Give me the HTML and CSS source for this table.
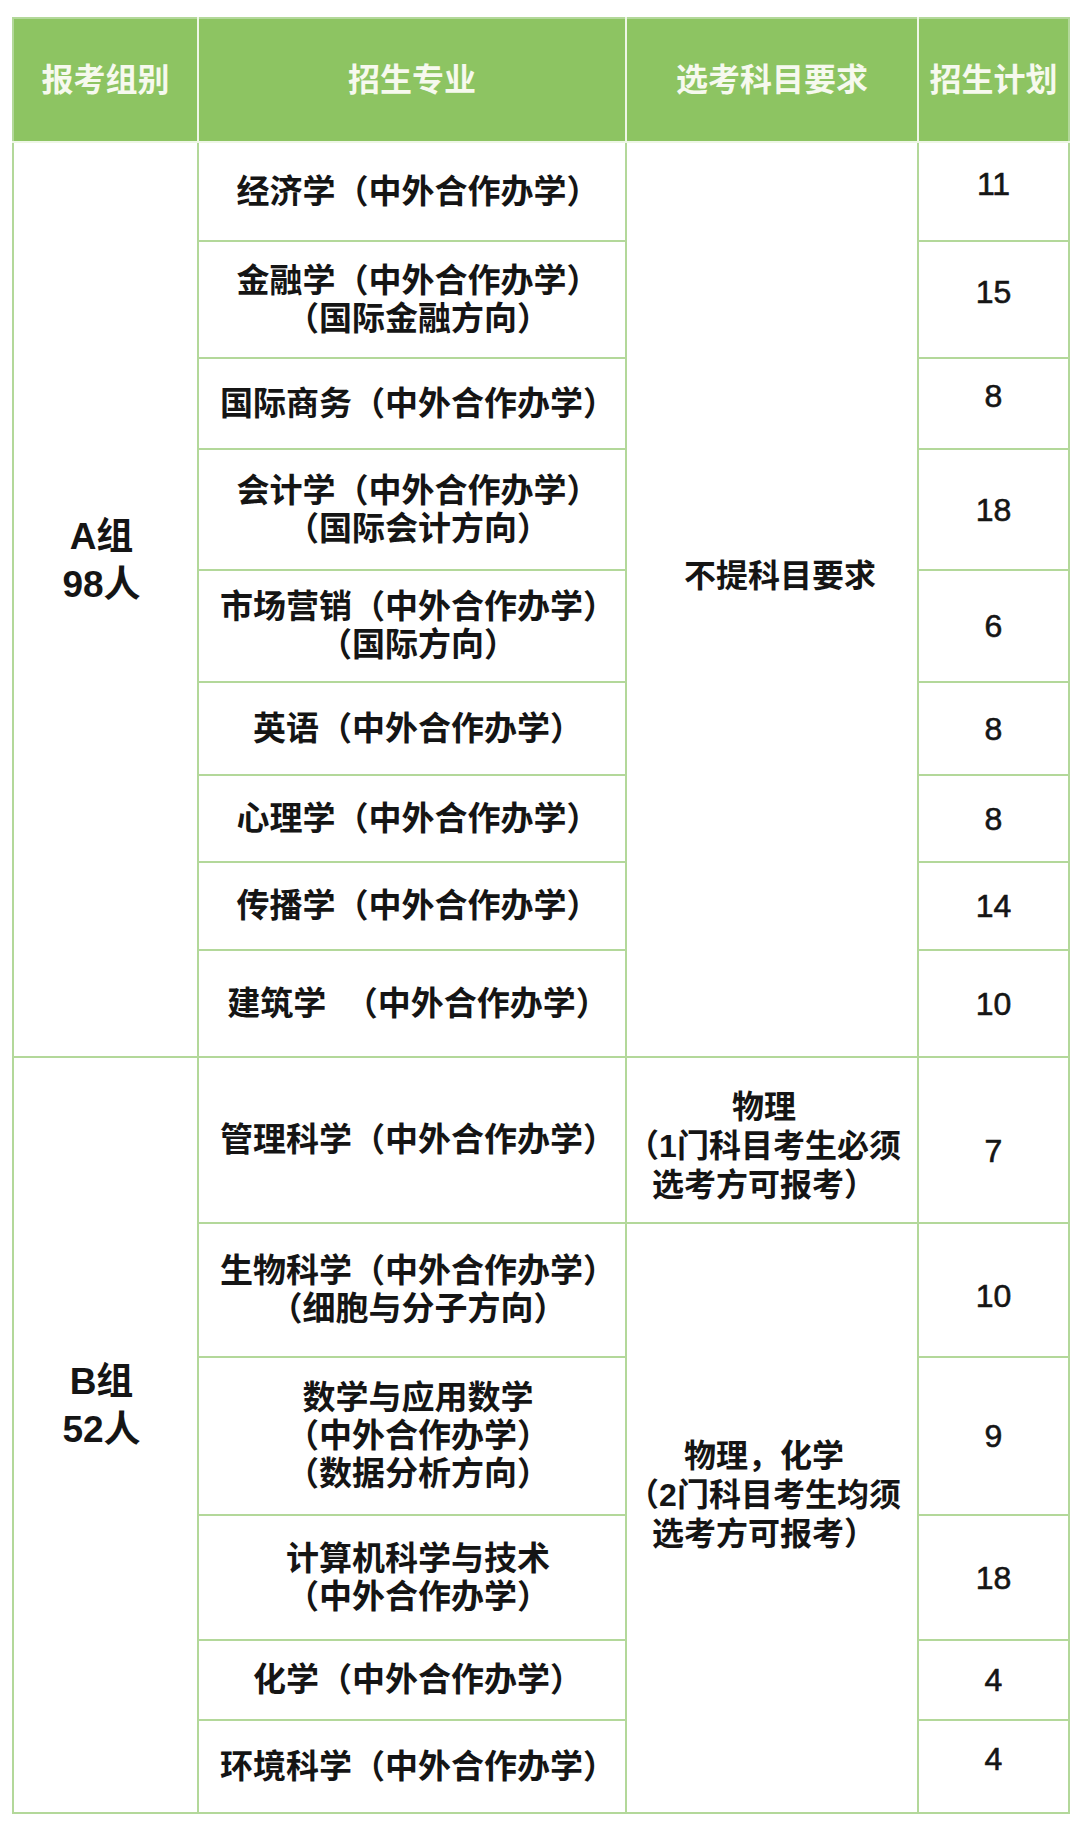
FILE: index.html
```html
<!DOCTYPE html>
<html lang="zh-CN">
<head>
<meta charset="utf-8">
<title>招生计划</title>
<link rel="stylesheet" href="styles.css">
</head>
<body>
<div class="page">
  <table class="plan">
    <colgroup>
      <col class="c-group">
      <col class="c-major">
      <col class="c-req">
      <col class="c-num">
    </colgroup>
    <thead>
      <tr class="h-head">
        <th>报考组别</th>
        <th>招生专业</th>
        <th>选考科目要求</th>
        <th>招生计划</th>
      </tr>
    </thead>
    <tbody>
      <tr class="h-99">
        <td class="group lift-a" rowspan="9">A组<br>98人</td>
        <td class="major">经济学（中外合作办学）</td>
        <td class="req lift-r right" rowspan="9">不提科目要求</td>
        <td class="num up">11</td>
      </tr>
      <tr class="h-117">
        <td class="major">金融学（中外合作办学）<br>（国际金融方向）</td>
        <td class="num up">15</td>
      </tr>
      <tr class="h-91">
        <td class="major">国际商务（中外合作办学）</td>
        <td class="num up">8</td>
      </tr>
      <tr class="h-121">
        <td class="major">会计学（中外合作办学）<br>（国际会计方向）</td>
        <td class="num">18</td>
      </tr>
      <tr class="h-112">
        <td class="major">市场营销（中外合作办学）<br>（国际方向）</td>
        <td class="num">6</td>
      </tr>
      <tr class="h-93">
        <td class="major">英语（中外合作办学）</td>
        <td class="num">8</td>
      </tr>
      <tr class="h-87">
        <td class="major">心理学（中外合作办学）</td>
        <td class="num">8</td>
      </tr>
      <tr class="h-88">
        <td class="major">传播学（中外合作办学）</td>
        <td class="num">14</td>
      </tr>
      <tr class="h-107">
        <td class="major">建筑学&nbsp; （中外合作办学）</td>
        <td class="num">10</td>
      </tr>
      <tr class="h-166">
        <td class="group lift-b" rowspan="6">B组<br>52人</td>
        <td class="major">管理科学（中外合作办学）</td>
        <td class="req low left">物理<br>（1门科目考生必须<br>选考方可报考）</td>
        <td class="num down2">7</td>
      </tr>
      <tr class="h-134">
        <td class="major">生物科学（中外合作办学）<br>（细胞与分子方向）</td>
        <td class="req lift-r left" rowspan="5">物理，化学<br>（2门科目考生均须<br>选考方可报考）</td>
        <td class="num down">10</td>
      </tr>
      <tr class="h-158">
        <td class="major">数学与应用数学<br>（中外合作办学）<br>（数据分析方向）</td>
        <td class="num">9</td>
      </tr>
      <tr class="h-125">
        <td class="major">计算机科学与技术<br>（中外合作办学）</td>
        <td class="num">18</td>
      </tr>
      <tr class="h-80">
        <td class="major">化学（中外合作办学）</td>
        <td class="num">4</td>
      </tr>
      <tr class="h-93">
        <td class="major">环境科学（中外合作办学）</td>
        <td class="num up">4</td>
      </tr>
    </tbody>
  </table>
</div>
</body>
</html>
```

FILE: styles.css
```css
html, body {
  margin: 0;
  padding: 0;
  background: #ffffff;
}

.page {
  padding: 17px 12px 16px 12px;
}

.plan {
  width: 1056px;
  table-layout: fixed;
  border-collapse: collapse;
  font-family: "Liberation Sans", "Noto Sans CJK SC", sans-serif;
  color: #151515;
  border: 2px solid #b3d89a;
}

.c-group { width: 185px; }
.c-major { width: 428px; }
.c-req { width: 292px; }
.c-num { width: 151px; }

.plan th {
  background: #8dc462;
  color: #f6f9ee;
  font-size: 32px;
  font-weight: 700;
  border: 2px solid #eef6e6;
  border-top-color: #b3d89a;
  text-align: center;
  vertical-align: middle;
  padding: 0 0 6px 0;
}

.plan th:first-child { border-left-color: #b3d89a; }
.plan th:last-child { border-right-color: #b3d89a; }

.plan td {
  border: 2px solid #b3d89a;
  text-align: center;
  vertical-align: middle;
  font-size: 33px;
  font-weight: 700;
  line-height: 38px;
  padding: 0;
}

.plan td.major {
  padding-left: 12px;
}

.plan td.group {
  font-size: 37px;
  line-height: 48px;
  padding-right: 8px;
}

.plan td.req {
  font-size: 32px;
  line-height: 39px;
}

.plan td.req.right { padding-left: 16px; }
.plan td.req.left { padding-right: 16px; }
.plan td.req.low { padding-top: 12px; }

.plan td.num {
  font-size: 32px;
  font-weight: 400;
  -webkit-text-stroke: 0.6px #151515;
}

.plan td.num.up { padding-bottom: 16px; }
.plan td.num.down { padding-top: 12px; }
.plan td.num.down2 { padding-top: 22px; }

.plan td.lift-a { padding-bottom: 78px; }
.plan td.lift-b { padding-bottom: 58px; }
.plan td.lift-r { padding-bottom: 46px; }

.h-head { height: 124px; }
.h-80 { height: 80px; }
.h-87 { height: 87px; }
.h-88 { height: 88px; }
.h-91 { height: 91px; }
.h-93 { height: 93px; }
.h-99 { height: 99px; }
.h-107 { height: 107px; }
.h-112 { height: 112px; }
.h-117 { height: 117px; }
.h-121 { height: 121px; }
.h-125 { height: 125px; }
.h-134 { height: 134px; }
.h-158 { height: 158px; }
.h-166 { height: 166px; }
```
